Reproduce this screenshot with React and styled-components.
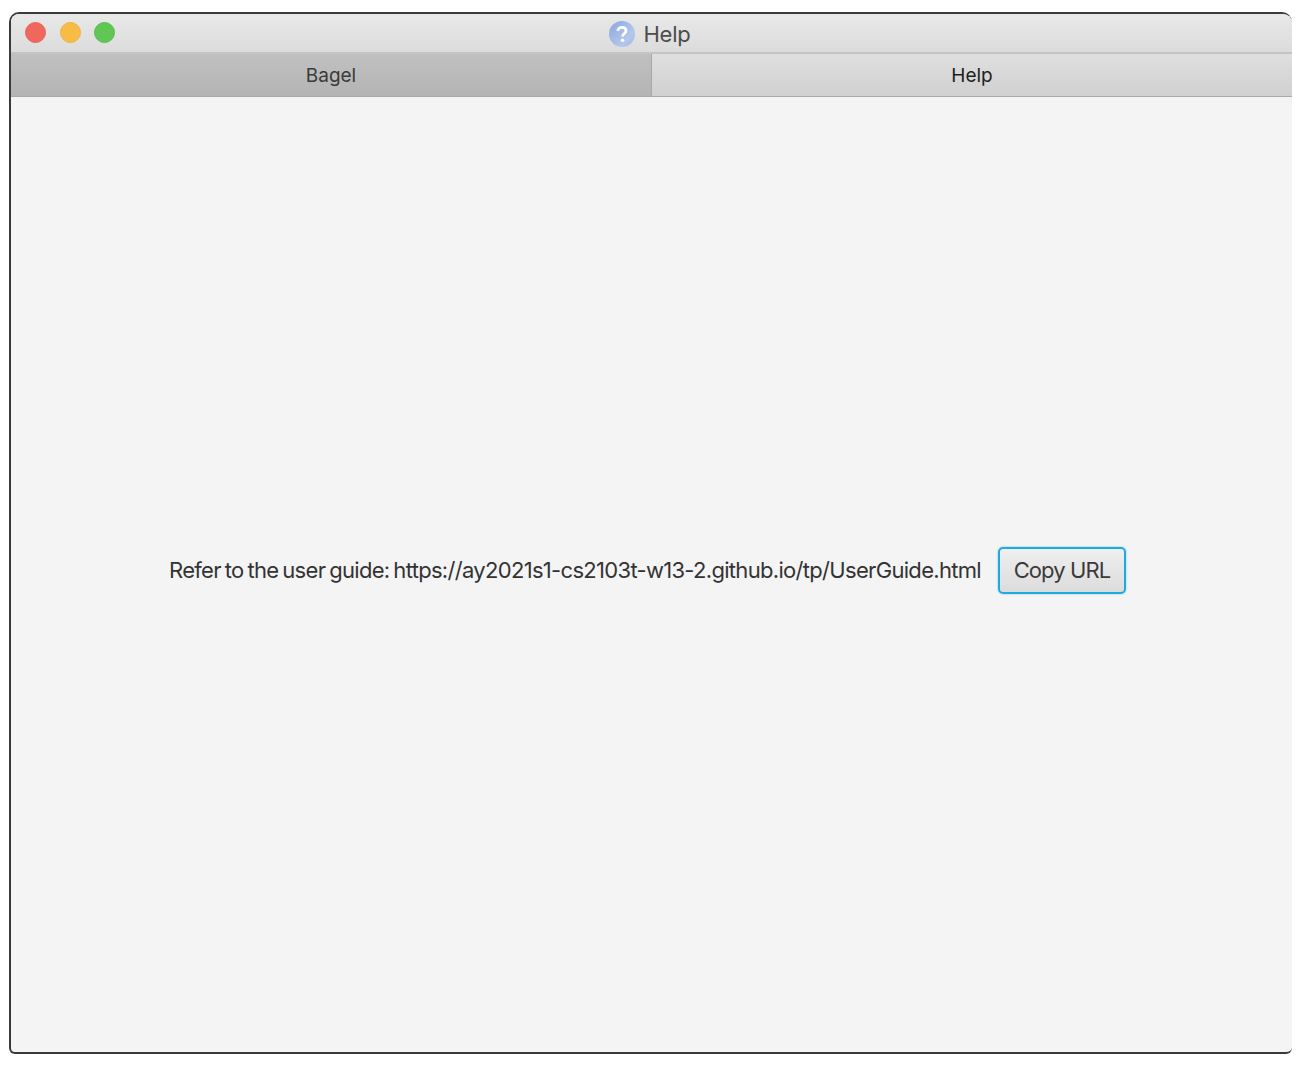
import React from "react";
import styled, { createGlobalStyle } from "styled-components";

const GlobalStyle = createGlobalStyle`
  html, body {
    margin: 0;
    background: #fff;
    font-family: "Inter", "Liberation Sans", sans-serif;
  }
  * {
    box-sizing: border-box;
  }
`;

const Page = styled.div`
  width: 1308px;
  height: 1070px;
  padding: 12px 16px 16px 9px;
`;

const Window = styled.div`
  height: 100%;
  display: flex;
  flex-direction: column;
  background: #f4f4f4;
  border-top: 2px solid #3a3a3a;
  border-left: 2px solid #3a3a3a;
  border-bottom: 2px solid #3a3a3a;
  border-radius: 10px 10px 6px 6px;
  overflow: hidden;
`;

const TitleBar = styled.div`
  position: relative;
  height: 40px;
  display: flex;
  align-items: center;
  justify-content: center;
  gap: 8px;
  padding: 1px 3px 0 0;
  background: linear-gradient(#e8e8e8, #dcdcdc);
  border-bottom: 2px solid #c4c4c4;
`;

const Lights = styled.div`
  position: absolute;
  left: 14px;
  top: 8px;
  display: flex;
  gap: 13.5px;
`;

const Light = styled.span`
  width: 21px;
  height: 21px;
  border-radius: 50%;
  background: ${(props) => props.color};
  border: 1px solid ${(props) => props.edge};
`;

const WindowTitle = styled.span`
  font-size: 22px;
  color: #4c4c4c;
  letter-spacing: -0.2px;
`;

const Tabs = styled.div`
  height: 43px;
  display: flex;
  border-bottom: 1px solid #a9a9a9;
`;

const Tab = styled.div`
  flex: 1;
  display: flex;
  align-items: center;
  justify-content: center;
  font-size: 19px;
  color: ${(props) => (props.active ? "#1e1e1e" : "#3a3a3a")};
  background: ${(props) =>
    props.active
      ? "linear-gradient(#dfdfdf, #d0d0d0)"
      : "linear-gradient(#c0c0c0, #b4b4b4)"};
  border-right: ${(props) => (props.active ? "none" : "1px solid #a8a8a8")};
`;

const Content = styled.div`
  flex: 1;
  display: flex;
  align-items: center;
  gap: 17px;
  padding: 0 0 8px 158px;
`;

const Message = styled.span`
  margin-bottom: 2px;
  font-size: 22px;
  color: #333;
  letter-spacing: -0.69px;
  word-spacing: -1.6px;
  white-space: nowrap;
`;

const CopyButton = styled.button`
  width: 128px;
  height: 47px;
  padding: 0 0 2px;
  font-family: inherit;
  font-size: 22px;
  letter-spacing: -0.9px;
  color: #3a3a3a;
  background: linear-gradient(#efefef, #dcdcdc);
  border: 2px solid #1ea9df;
  border-radius: 5px;
  box-shadow: 0 0 2px rgba(30, 169, 223, 0.6);
`;

const HelpIcon = () => (
  <svg width="26" height="26" viewBox="0 0 26 26">
    <defs>
      <linearGradient id="helpFill" x1="0" y1="0" x2="1" y2="1">
        <stop offset="0" stopColor="#8ba6dc" />
        <stop offset="0.7" stopColor="#b4c8ec" />
        <stop offset="1" stopColor="#9db4e2" />
      </linearGradient>
    </defs>
    <circle cx="13" cy="13" r="13" fill="url(#helpFill)" />
    <path
      d="M9 10 C9 7.4 11 6.4 13 6.4 C15.4 6.4 17 7.8 17 9.8 C17 12.4 13.6 12.6 13.6 15.4"
      fill="none"
      stroke="#fff"
      strokeWidth="2.8"
    />
    <circle cx="13.5" cy="19.2" r="1.8" fill="#fff" />
  </svg>
);

const App = () => (
  <Page>
    <GlobalStyle />
    <Window>
      <TitleBar>
        <Lights>
          <Light color="#f0675e" edge="#e6625a" />
          <Light color="#f8bb45" edge="#edb142" />
          <Light color="#60c654" edge="#58bb4c" />
        </Lights>
        <HelpIcon />
        <WindowTitle>Help</WindowTitle>
      </TitleBar>
      <Tabs>
        <Tab>Bagel</Tab>
        <Tab active>Help</Tab>
      </Tabs>
      <Content>
        <Message>
          Refer to the user guide: https://ay2021s1-cs2103t-w13-2.github.io/tp/UserGuide.html
        </Message>
        <CopyButton>Copy URL</CopyButton>
      </Content>
    </Window>
  </Page>
);

export default App;
